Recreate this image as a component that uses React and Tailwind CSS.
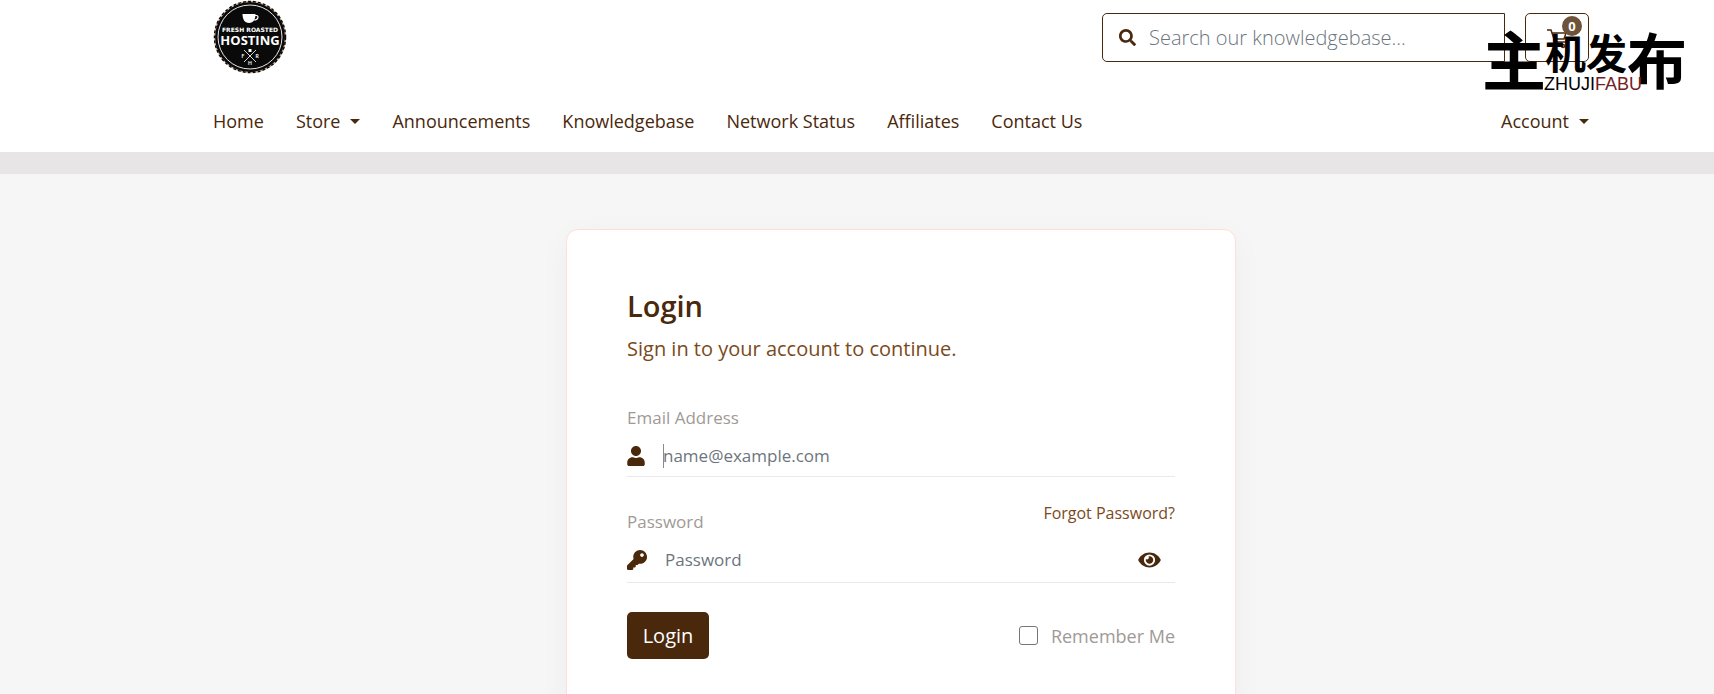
import { FaSearch, FaUser, FaKey, FaEye } from 'react-icons/fa';

const navItems = [
  { label: 'Home' },
  { label: 'Store', dropdown: true },
  { label: 'Announcements' },
  { label: 'Knowledgebase' },
  { label: 'Network Status' },
  { label: 'Affiliates' },
  { label: 'Contact Us' },
];

const Caret = () => (
  <span className="ml-[10px] border-x-[5px] border-t-[5px] border-x-transparent border-t-[#49280c]" />
);

const NavLink = ({ label, dropdown }) => (
  <a href="#" className="flex items-center whitespace-nowrap text-[18px] leading-7 text-[#49280c]">
    {label}
    {dropdown && <Caret />}
  </a>
);

const Logo = () => (
  <svg viewBox="0 0 74 74" className="h-[74px] w-[74px]" role="img" aria-label="Fresh Roasted Hosting">
    <circle cx="38" cy="38" r="35" fill="#bdbdbd" />
    <circle cx="37" cy="37" r="35" fill="#0a0a0a" />
    <circle cx="37" cy="37" r="35.500" fill="none" stroke="#0a0a0a" strokeWidth="1.500" strokeDasharray="3 2" />
    <circle cx="37" cy="37" r="35.500" fill="none" stroke="#c99a6b" strokeWidth="1" strokeDasharray="2 3" strokeDashoffset="2" />
    <circle cx="37" cy="37" r="32" fill="none" stroke="#e8e8e8" strokeWidth="1" />
    {/* coffee cup */}
    <path d="M29.500 14h13c0 5-2 9-6.500 9s-6.500-4-6.500-9z" fill="#fff" />
    <path d="M42 15.500h1.500c2.500 0 2 4.500-2.500 4.500" fill="none" stroke="#fff" strokeWidth="1.200" />
    <text x="37" y="32" textAnchor="middle" fontSize="6" fontWeight="700" fill="#fff" fontFamily="DejaVu Sans, sans-serif">
      FRESH ROASTED
    </text>
    <text x="37" y="45" textAnchor="middle" fontSize="13" fontWeight="700" fill="#fff" fontFamily="Open Sans, sans-serif">
      HOSTING
    </text>
    {/* crossed spoons with initials */}
    <path d="M31 50l12 12M43 50L31 62" stroke="#d5d5d5" strokeWidth="1" />
    <path d="M35.500 49h3v3h-3z" fill="#fff" />
    <g fill="#fff" fontSize="5" fontWeight="700" fontFamily="Lato, sans-serif" textAnchor="middle">
      <text x="30" y="58">F</text>
      <text x="44" y="58">R</text>
      <text x="37" y="65">H</text>
    </g>
  </svg>
);

const CartIcon = () => (
  <svg viewBox="0 0 24 24" className="h-6 w-6" fill="none" stroke="#49280c" strokeWidth="1.500">
    <path d="M2 4h4l4 12h11" />
    <path d="M7 7h14l-2 6H9" />
    <circle cx="10" cy="20" r="1.500" />
    <circle cx="18" cy="20" r="1.500" />
  </svg>
);

const SiteStamp = () => (
  <div
    className="pointer-events-none absolute top-[25px] right-[28px] h-[68px] w-[204px] font-['Noto_Sans_CJK_SC',sans-serif] font-bold text-black"
    aria-hidden="true"
  >
    <span className="absolute top-0 left-0 text-[64px] leading-[64px]">主</span>
    <span className="absolute top-[6px] left-[63px] text-[41px] leading-[41px]">机</span>
    <span className="absolute top-[6px] left-[104px] text-[41px] leading-[41px]">发</span>
    <span className="absolute top-[3px] left-[145px] text-[60px] leading-[60px]">布</span>
    <span className="absolute top-[49px] left-[62px] font-['Liberation_Sans',sans-serif] text-[18px] leading-5 font-normal">
      ZHUJI<span className="text-[#74211f]">FABU</span>
    </span>
  </div>
);

const Header = () => (
  <header className="bg-white pl-[88px]">
    <div className="mx-auto max-w-[1376px]">
      <div className="flex items-start justify-between">
        <a href="#">
          <Logo />
        </a>
        <div className="mt-[13px] flex gap-5">
          <form className="flex h-[49px] w-[403px] items-center rounded-l-[5px] border border-[#49280c] px-4">
            <button type="submit" aria-label="Search">
              <FaSearch className="h-[17px] w-[17px] text-[#49280c]" />
            </button>
            <input
              type="text"
              aria-label="Search our knowledgebase"
              placeholder="Search our knowledgebase..."
              className="ml-[13px] min-w-0 flex-1 text-[20px] font-light outline-none placeholder:text-[#6c757d]"
            />
          </form>
          <button
            type="button"
            aria-label="Shopping cart"
            className="relative flex h-[49px] w-16 items-center justify-center rounded-[5px] border border-[#49280c]"
          >
            <CartIcon />
            <span className="absolute top-[2px] right-[6px] flex h-5 w-5 items-center justify-center rounded-full bg-[#6d5339] text-[13px] leading-4 font-bold text-white">
              0
            </span>
          </button>
        </div>
      </div>
      <nav className="flex items-center justify-between pt-[33px] pb-[17px]">
        <div className="flex gap-8">
          {navItems.map((item) => (
            <NavLink key={item.label} {...item} />
          ))}
        </div>
        <NavLink label="Account" dropdown />
      </nav>
    </div>
  </header>
);

const LoginCard = () => (
  <form className="mx-auto max-w-[670px] rounded-xl border border-[#fde0d3] bg-white px-[60px] pt-[58px] pb-24 shadow-[0_8px_32px_rgba(0,0,0,0.04)]">
    <h1 className="text-[29px] leading-9 font-semibold text-[#49280c]">Login</h1>
    <p className="mt-[11px] text-[20px] leading-7 text-[#7b4a1c]">Sign in to your account to continue.</p>

    <div className="mt-[43px] border-b border-[#e9e9e9] pb-2">
      <label htmlFor="email" className="block text-[17px] leading-6 text-[#a09a96]">
        Email Address
      </label>
      <div className="mt-[14px] flex items-center">
        <FaUser className="h-5 w-[18px] text-[#49280c]" />
        <div className="relative ml-[18px] flex-1">
          <span className="absolute top-0 left-0 h-6 w-px bg-[#8a8a8a]" />
          <input
            id="email"
            type="email"
            placeholder="name@example.com"
            className="block w-full text-[17px] leading-6 outline-none placeholder:text-[#6c757d]"
          />
        </div>
      </div>
    </div>

    <div className="mt-[26px] border-b border-[#e9e9e9] pb-[10px]">
      <div className="flex items-end justify-between">
        <label htmlFor="password" className="text-[17px] leading-6 text-[#a09a96]">
          Password
        </label>
        <a href="#" className="mb-[11px] text-[16px] leading-5 text-[#7b4a1c]">
          Forgot Password?
        </a>
      </div>
      <div className="mt-[14px] flex items-center">
        <FaKey className="h-5 w-5 text-[#49280c]" />
        <input
          id="password"
          type="password"
          placeholder="Password"
          className="ml-[18px] min-w-0 flex-1 text-[17px] leading-6 outline-none placeholder:text-[#6c757d]"
        />
        <button type="button" aria-label="Show password" className="mr-[14px]">
          <FaEye className="h-5 w-[23px] text-[#49280c]" />
        </button>
      </div>
    </div>

    <div className="mt-[29px] flex items-center justify-between">
      <button type="submit" className="h-[47px] w-[82px] rounded-[5px] bg-[#49280c] text-[20px] text-white">
        Login
      </button>
      <label className="flex items-center gap-[13px] text-[18px] leading-6 text-[#a09a96]">
        <input type="checkbox" className="h-[19px] w-[19px] appearance-none rounded-[3px] border border-[#767676]" />
        Remember Me
      </label>
    </div>
  </form>
);

export default function App() {
  return (
    <div className="relative h-screen overflow-hidden bg-[#f6f6f6] font-['Open_Sans',sans-serif]">
      <Header />
      <div className="h-[22px] bg-[#e8e5e6]" />
      <main className="pt-[55px] pl-[88px]">
        <LoginCard />
      </main>
      <SiteStamp />
    </div>
  );
}
